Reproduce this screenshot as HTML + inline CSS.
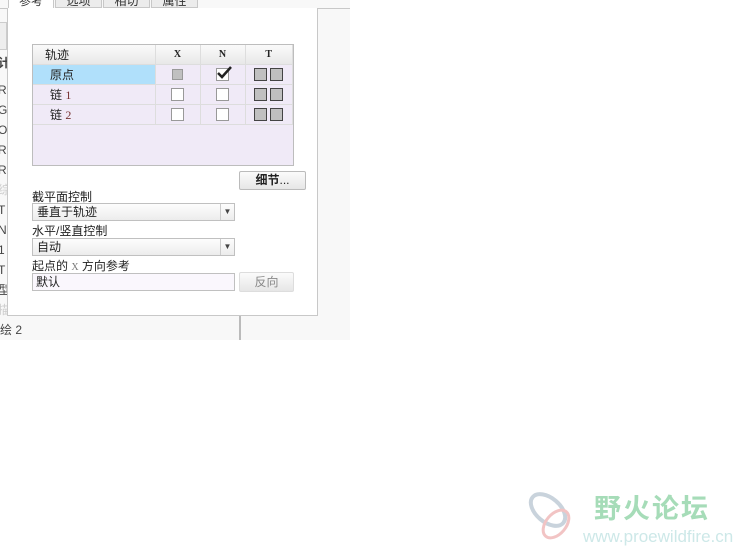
<!DOCTYPE html>
<html><head><meta charset="utf-8">
<style>
*{margin:0;padding:0;box-sizing:border-box}
body{width:736px;height:554px;background:#fff;position:relative;overflow:hidden;font-family:"Liberation Sans","Noto Sans CJK SC",sans-serif;font-size:12px;color:#222}
.abs{position:absolute}
.bg{left:0;top:0;width:350px;height:340px;background:#f8f8f8}
.tab{top:-6px;height:14px;border:1px solid #c8c8c8;background:#ececec;font-size:12px;text-align:center;line-height:12px;color:#333}
.panel{left:7px;top:8px;width:311px;height:308px;background:#fff;border:1px solid #c8c8c8;border-top:none}
.lt{left:-2px;font-size:12px;color:#444;line-height:20px}
table{border-collapse:collapse;font-size:12px}
.tbl{left:32px;top:44px;width:262px;height:122px;border:1px solid #bdbdbd;background:#f0eaf7}
td,th{border-right:1px solid #ddd;border-bottom:1px solid #ddd;height:20px;padding:0}
th{background:linear-gradient(#fafafa,#e8e8e8);height:19px;font-family:"Liberation Serif",serif;font-size:10px;font-weight:bold;text-align:center}
.cb{display:inline-block;width:13px;height:13px;border:1px solid #999;background:#fff;vertical-align:middle}
.g{background:#c0c0c0;border-color:#444}
.sel{left:32px;width:203px;height:18px;border:1px solid #c0c0c0;background:linear-gradient(#fdfdfd,#ececec);padding-left:4px;line-height:16px;font-size:12px}
.arr{position:absolute;right:0;top:0;width:14px;height:16px;border-left:1px solid #ccc;font-size:8px;text-align:center;line-height:16px;color:#444}
.lbl{left:32px;font-size:12px;line-height:12px}
.btn{border:1px solid #bbb;border-radius:2px;background:linear-gradient(#fbfbfb,#e6e6e6);text-align:center;font-size:12px}
</style></head><body>
<div class="abs bg"></div>
<div class="abs" style="left:0;top:8px;width:350px;height:1px;background:#c8c8c8"></div>
<div class="abs tab" style="left:8px;width:46px;background:#fff;border-bottom:none">参考</div>
<div class="abs tab" style="left:55px;width:47px">选项</div>
<div class="abs tab" style="left:103px;width:47px">相切</div>
<div class="abs tab" style="left:151px;width:47px">属性</div>
<div class="abs" style="left:0;top:22px;width:7px;height:28px;border:1px solid #ccc;border-left:none;background:#eee"></div>
<div class="abs lt" style="top:53px;font-weight:bold">计</div>
<div class="abs lt" style="top:80px">R<br>G<br>O<br>R<br>R<br><span style="color:#ccc">综</span><br>T<br>N<br>1<br>T<br>型<br><span style="color:#ccc">描</span></div>
<div class="abs lt" style="left:0;top:320px;font-size:12px">绘 2</div>
<div class="abs" style="left:239px;top:315px;width:2px;height:25px;background:#bbb"></div>
<div class="abs panel"></div>
<div class="abs" style="left:7px;top:9px;width:1px;height:307px;background:#c8c8c8"></div>
<div class="abs tbl">
<table style="width:260px">
<tr><th style="width:122px;text-align:left;padding-left:12px;font-family:'Liberation Sans','Noto Sans CJK SC',sans-serif;font-size:12px;font-weight:normal">轨迹</th><th style="width:45px">X</th><th style="width:45px">N</th><th>T</th></tr>
<tr><td style="background:#b0e0fb;padding-left:17px">原点</td><td style="text-align:center"><span class="cb g" style="border-color:#999;width:11px;height:11px"></span></td><td style="text-align:center"><span class="cb" style="position:relative"><svg style="position:absolute;left:0;top:-4px" width="15" height="15" viewBox="0 0 15 15"><path d="M1 8 L5 12 L14 2" fill="none" stroke="#222" stroke-width="2.5"/></svg></span></td><td style="text-align:center"><span class="cb g"></span> <span class="cb g"></span></td></tr>
<tr><td style="padding-left:17px">链 <span style="font-family:'Liberation Serif';color:#733">1</span></td><td style="text-align:center"><span class="cb"></span></td><td style="text-align:center"><span class="cb"></span></td><td style="text-align:center"><span class="cb g"></span> <span class="cb g"></span></td></tr>
<tr><td style="padding-left:17px">链 <span style="font-family:'Liberation Serif';color:#733">2</span></td><td style="text-align:center"><span class="cb"></span></td><td style="text-align:center"><span class="cb"></span></td><td style="text-align:center"><span class="cb g"></span> <span class="cb g"></span></td></tr>
</table></div>
<div class="abs btn" style="left:239px;top:171px;width:67px;height:19px;line-height:17px;font-weight:bold">细节<span style="font-weight:normal">...</span></div>
<div class="abs lbl" style="top:191px">截平面控制</div>
<div class="abs sel" style="top:203px">垂直于轨迹<div class="arr">▼</div></div>
<div class="abs lbl" style="top:225px">水平/竖直控制</div>
<div class="abs sel" style="top:238px">自动<div class="arr">▼</div></div>
<div class="abs lbl" style="top:260px">起点的 <span style="font-family:'Liberation Serif';font-size:10px;color:#777">X</span> 方向参考</div>
<div class="abs" style="left:32px;top:273px;width:203px;height:18px;border:1px solid #c0c0c0;background:#faf7fd;padding-left:3px;line-height:16px">默认</div>
<div class="abs btn" style="left:239px;top:272px;width:55px;height:20px;line-height:18px;color:#888;border-color:#ddd">反向</div>
<svg class="abs" style="left:526px;top:488px" width="56" height="62" viewBox="0 0 56 62"><ellipse cx="22" cy="22" rx="20" ry="12" transform="rotate(40 22 22)" fill="none" stroke="#c9d3dc" stroke-width="4"/><ellipse cx="30" cy="36" rx="16" ry="10" transform="rotate(-50 30 36)" fill="none" stroke="#f2c4c4" stroke-width="3"/></svg>
<div class="abs" style="left:594px;top:490px;font-size:27px;font-weight:bold;color:#a6dcb8;letter-spacing:2px;font-family:'Noto Sans CJK SC',sans-serif;line-height:34px">野火论坛</div>
<div class="abs" style="left:583px;top:527px;font-size:17px;color:#cde8e8;line-height:20px">www.proewildfire.cn</div>
</body></html>
